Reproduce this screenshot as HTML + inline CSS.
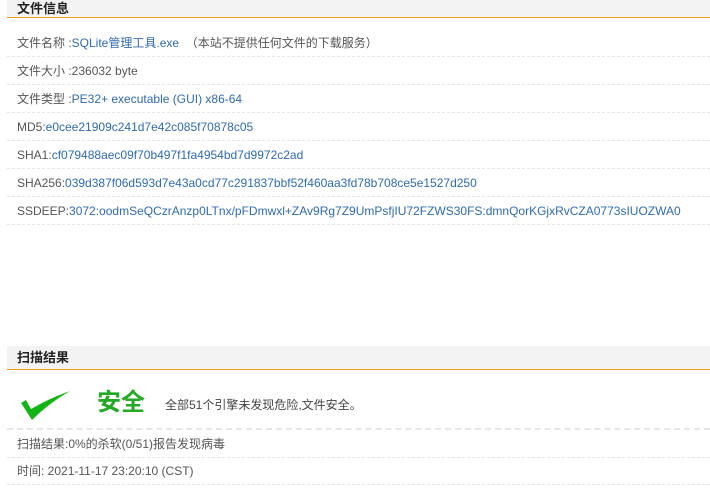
<!DOCTYPE html>
<html><head><meta charset="utf-8"><style>
body{margin:0;width:710px;height:495px;background:#fff;font-family:"Liberation Sans","Noto Sans CJK SC",sans-serif;font-size:12px;color:#555;position:relative;overflow:hidden}
.hd{position:absolute;left:7px;right:0;background:#f3f3f3;border-bottom:1px solid #f39c12;font-weight:bold;font-size:13px;color:#222;padding-left:10px;box-sizing:border-box}
.row{position:absolute;left:7px;right:0;height:28px;line-height:28px;padding-left:10px;border-bottom:1px dashed #e6e6e6;box-sizing:border-box;white-space:nowrap}
.b{color:#2f6bad}
</style></head><body>
<div class="hd" style="top:0;height:18px;line-height:17px">文件信息</div>
<div class="row" style="top:29px">文件名称 :<span class="b">SQLite管理工具.exe</span> &nbsp;（本站不提供任何文件的下载服务）</div>
<div class="row" style="top:57px">文件大小 :236032 byte</div>
<div class="row" style="top:85px">文件类型 :<span class="b">PE32+ executable (GUI) x86-64</span></div>
<div class="row" style="top:113px">MD5:<span class="b">e0cee21909c241d7e42c085f70878c05</span></div>
<div class="row" style="top:141px">SHA1:<span class="b">cf079488aec09f70b497f1fa4954bd7d9972c2ad</span></div>
<div class="row" style="top:169px">SHA256:<span class="b">039d387f06d593d7e43a0cd77c291837bbf52f460aa3fd78b708ce5e1527d250</span></div>
<div class="row" style="top:197px">SSDEEP:<span class="b">3072:oodmSeQCzrAnzp0LTnx/pFDmwxl+ZAv9Rg7Z9UmPsfjIU72FZWS30FS:dmnQorKGjxRvCZA0773sIUOZWA0</span></div>

<div class="hd" style="top:346px;height:24px;line-height:24px">扫描结果</div>
<svg style="position:absolute;left:15px;top:385px" width="65" height="42" viewBox="0 0 65 42"><path d="M6 18 L11 15 L16 24 Q35 13 55 6 Q34 18 17 35 Z" fill="#14b414"/></svg>
<div style="position:absolute;left:97px;top:389px;font-size:24px;font-weight:bold;color:#22aa22;line-height:28px">安全</div>
<div style="position:absolute;left:165px;top:396px;font-size:12px;color:#444">全部51个引擎未发现危险,文件安全。</div>
<div style="position:absolute;left:7px;right:0;top:428px;border-top:2px dashed #e6e6e6"></div>
<div class="row" style="top:430px">扫描结果:0%的杀软(0/51)报告发现病毒</div>
<div class="row" style="top:457px">时间: 2021-11-17 23:20:10 (CST)</div>
</body></html>
